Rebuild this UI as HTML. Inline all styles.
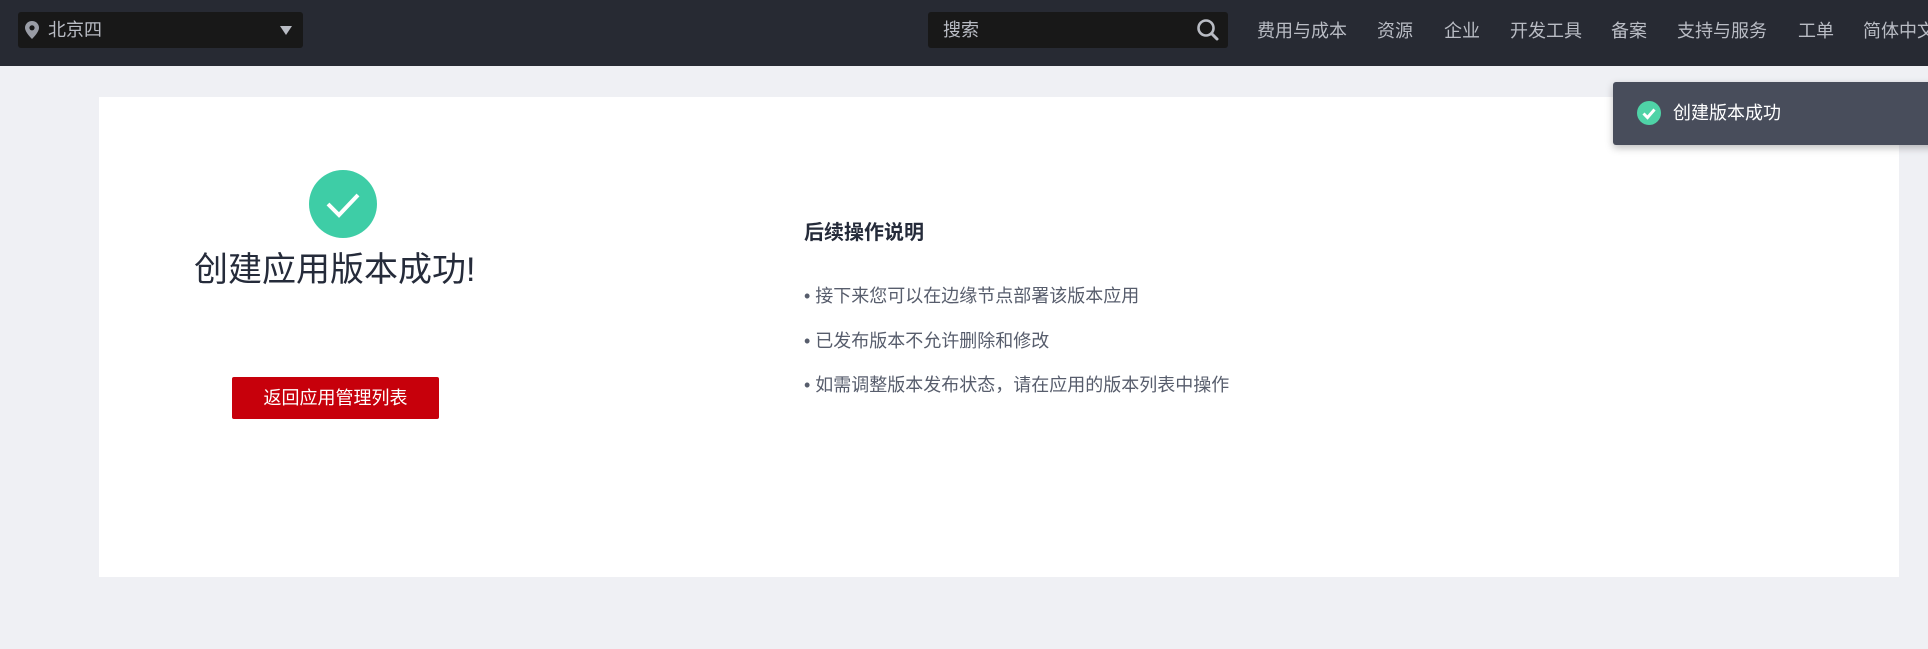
<!DOCTYPE html>
<html><head><meta charset="utf-8"><style>
*{margin:0;padding:0;box-sizing:border-box}
body{width:1928px;height:649px;background:#eff0f4;font-family:"Liberation Sans","Noto Sans CJK SC",sans-serif;position:relative;overflow:hidden}
.hd{position:absolute;left:0;top:0;width:1928px;height:66px;background:#272a33}
.abs{position:absolute;white-space:nowrap}
.nav{color:#b9bcc4;font-size:18px;top:19px;line-height:24px}
</style></head><body>
<div class="hd"></div>
<div class="abs" style="left:18px;top:12px;width:285px;height:36px;background:#181818;border-radius:3px"></div>
<svg class="abs" style="left:25px;top:21px" width="14" height="18" viewBox="0 0 14 18"><path d="M7 0C3.1 0 0 3 0 6.8 0 11.5 7 18 7 18s7-6.5 7-11.2C14 3 10.9 0 7 0z" fill="#9a9da6"/><circle cx="7" cy="6.8" r="2.6" fill="#181818"/></svg>
<div class="abs nav" style="left:48px;top:18px;color:#b9bcc4">北京四</div>
<svg class="abs" style="left:280px;top:26px" width="12" height="10"><path d="M0 0H12L6 9z" fill="#b9bcc4"/></svg>
<div class="abs" style="left:928px;top:12px;width:300px;height:36px;background:#181818;border-radius:3px"></div>
<div class="abs nav" style="left:943px;top:18px">搜索</div>
<svg class="abs" style="left:1196px;top:18px" width="24" height="24" viewBox="0 0 24 24"><circle cx="10" cy="10" r="7.5" stroke="#b9bcc4" stroke-width="2.6" fill="none"/><path d="M15.5 15.5L21 21" stroke="#b9bcc4" stroke-width="3" stroke-linecap="round"/></svg>
<div class="abs nav" style="left:1257px">费用与成本</div>
<div class="abs nav" style="left:1377px">资源</div>
<div class="abs nav" style="left:1444px">企业</div>
<div class="abs nav" style="left:1510px">开发工具</div>
<div class="abs nav" style="left:1611px">备案</div>
<div class="abs nav" style="left:1677px">支持与服务</div>
<div class="abs nav" style="left:1798px">工单</div>
<div class="abs nav" style="left:1863px">简体中文</div>

<div class="abs" style="left:99px;top:97px;width:1800px;height:480px;background:#fff"></div>
<svg class="abs" style="left:309px;top:170px" width="68" height="68" viewBox="0 0 68 68"><circle cx="34" cy="34" r="34" fill="#3ecda6"/><path d="M19 34L30 45 49 25" stroke="#fff" stroke-width="4" fill="none"/></svg>
<div class="abs" style="left:194px;top:248px;font-size:34px;color:#252b3a;line-height:44px">创建应用版本成功!</div>
<div class="abs" style="left:232px;top:377px;width:207px;height:42px;background:#c7000b;border-radius:2px;color:#fff;font-size:18px;line-height:42px;text-align:center">返回应用管理列表</div>
<div class="abs" style="left:804px;top:220px;font-size:20px;font-weight:bold;color:#252b3a;line-height:26px">后续操作说明</div>
<div class="abs" style="left:804px;top:284px;font-size:18px;color:#575d6c;line-height:24px">• 接下来您可以在边缘节点部署该版本应用</div>
<div class="abs" style="left:804px;top:329px;font-size:18px;color:#575d6c;line-height:24px">• 已发布版本不允许删除和修改</div>
<div class="abs" style="left:804px;top:373px;font-size:18px;color:#575d6c;line-height:24px">• 如需调整版本发布状态，请在应用的版本列表中操作</div>

<div class="abs" style="left:1613px;top:82px;width:330px;height:63px;background:#484d5b;border-radius:3px;box-shadow:0 3px 8px rgba(0,0,0,.25)"></div>
<svg class="abs" style="left:1637px;top:101px" width="24" height="24" viewBox="0 0 24 24"><circle cx="12" cy="12" r="12" fill="#4fd3a7"/><path d="M6.5 12.5L10.5 16.5 17.5 8.5" stroke="#fff" stroke-width="3" fill="none"/></svg>
<div class="abs" style="left:1673px;top:101px;font-size:18px;color:#fff;line-height:24px">创建版本成功</div>
</body></html>
